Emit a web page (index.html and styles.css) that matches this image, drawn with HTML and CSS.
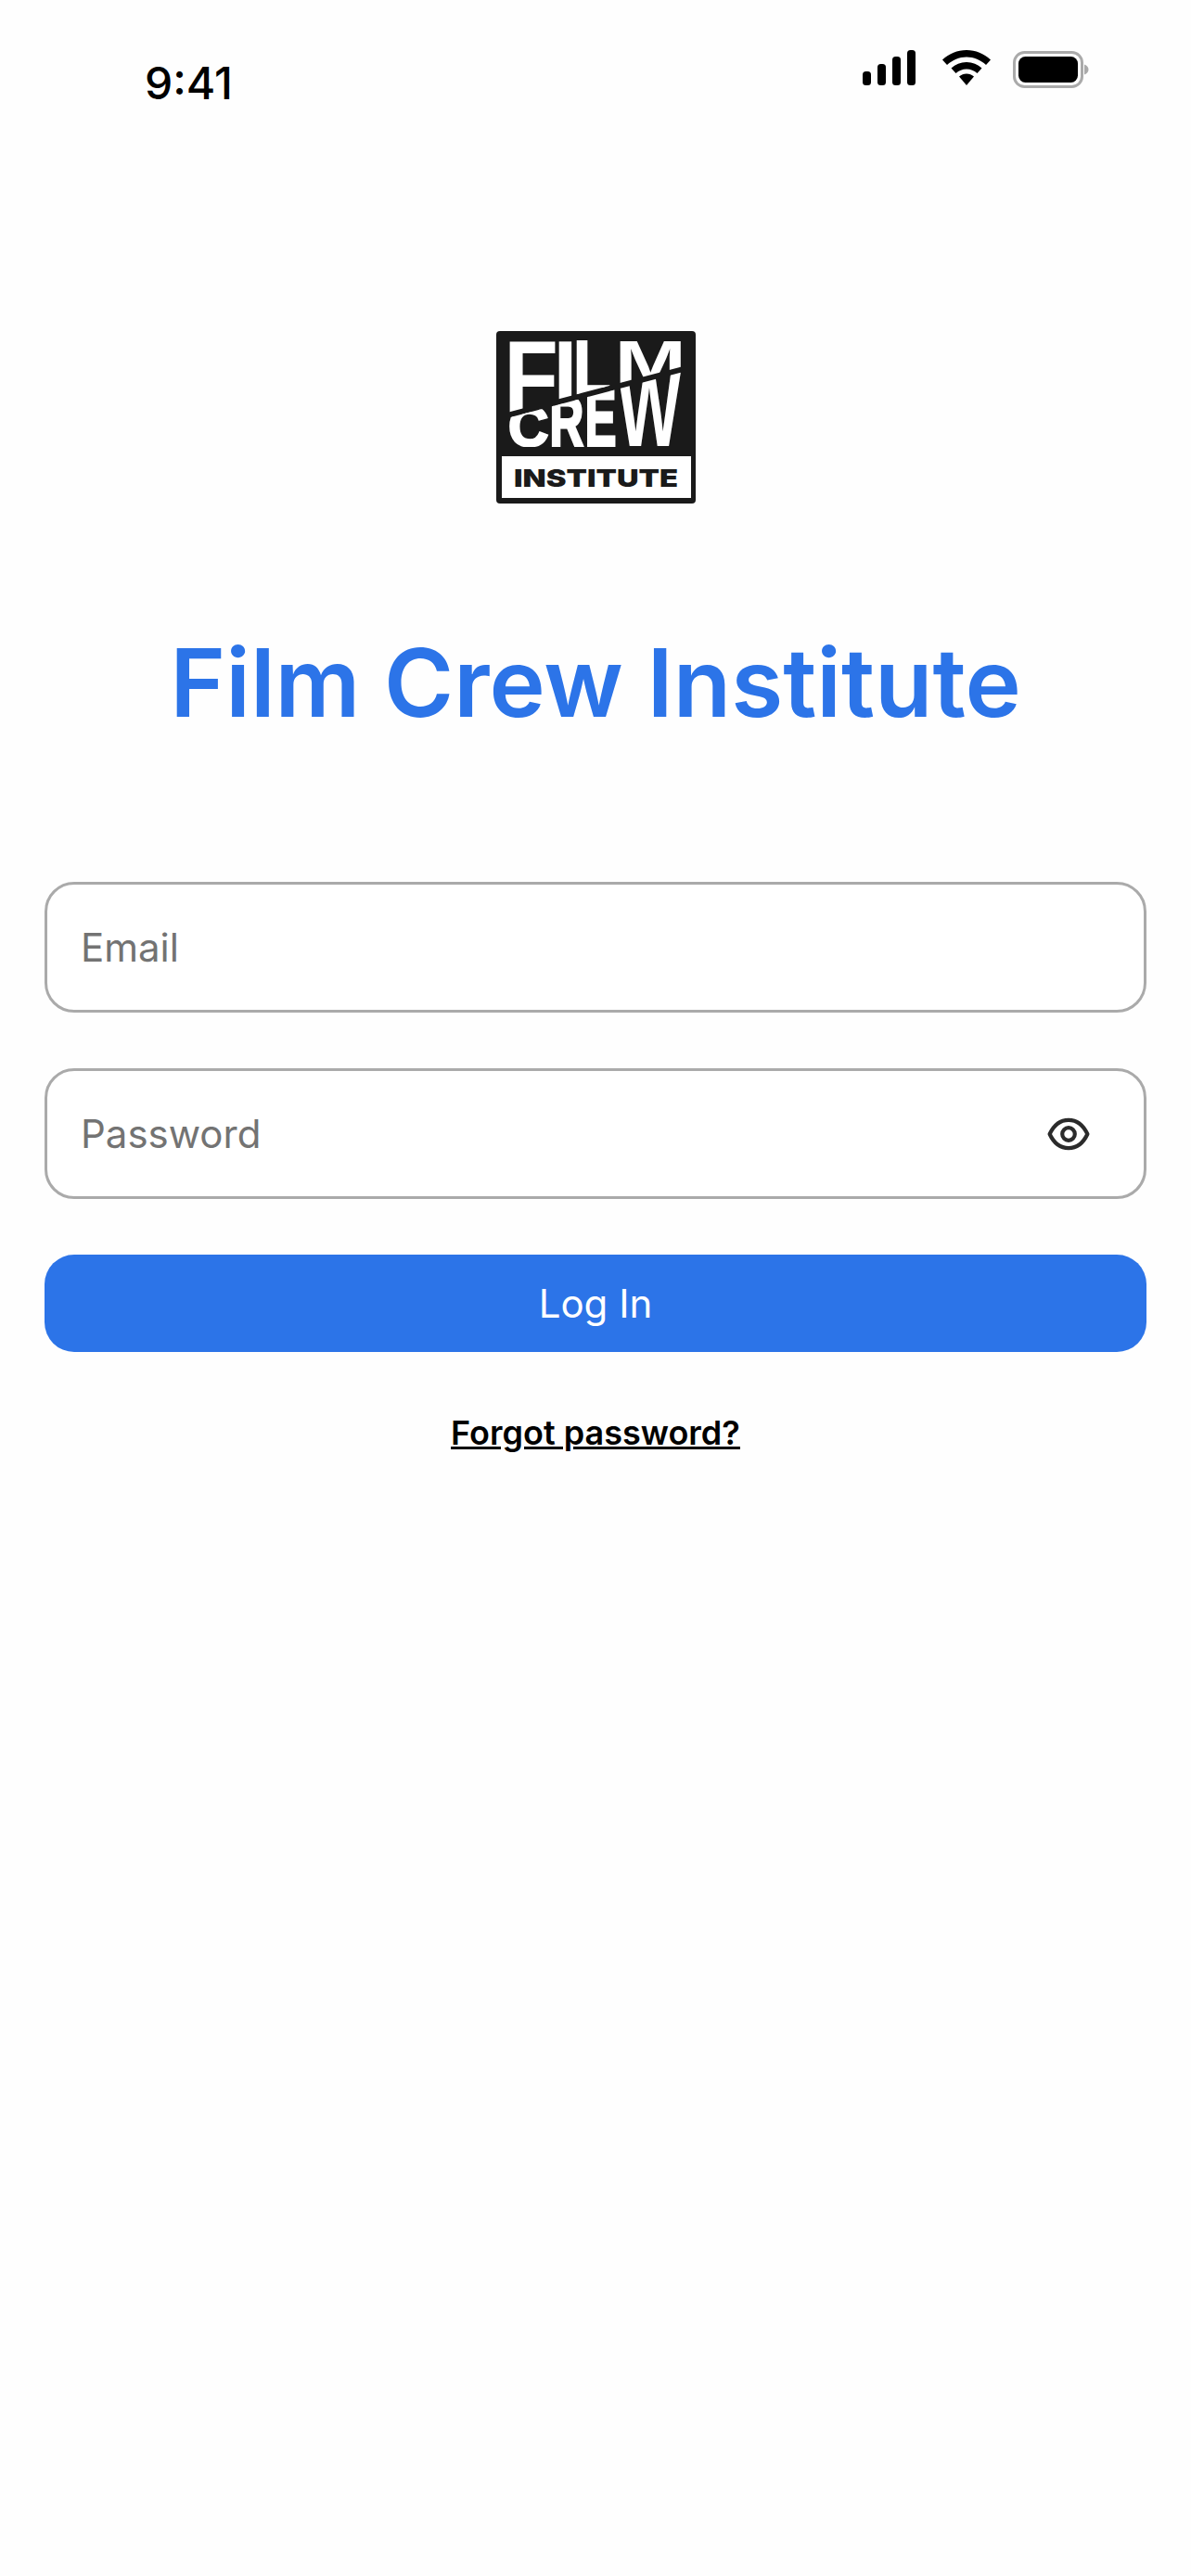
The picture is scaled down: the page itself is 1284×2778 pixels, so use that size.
FILE: index.html
```html
<!DOCTYPE html>
<html lang="en">
<head>
<meta charset="utf-8">
<title>Film Crew Institute</title>
<link rel="stylesheet" href="styles.css">
</head>
<body>
<div class="screen">
  <header class="status">
    <span class="time">9:41</span>
    <div class="status-icons">
      <svg class="signal" width="57" height="38" viewBox="0 0 57 38"><rect x="0" y="23" width="9" height="15" rx="3.5"/><rect x="16" y="15" width="9" height="23" rx="3.5"/><rect x="32" y="7" width="9" height="31" rx="3.5"/><rect x="48" y="0" width="9" height="38" rx="3.5"/></svg>
      <svg class="wifi" width="52" height="38" viewBox="0 0 52 38"><path d="M26 0C16 0 7.500 3.800 0 10.500L5 16C11 10.800 18 7.600 26 7.600S41 10.800 47 16L52 10.500C44.500 3.800 36 0 26 0Z"/><path d="M26 13C19.500 13 14 15.300 9.500 19.500L14.500 25C18 22 21.500 20.500 26 20.500S34 22 37.500 25L42.500 19.500C38 15.300 32.500 13 26 13Z"/><path d="M26 25.500C23 25.500 20.500 26.500 18 28.500L26 38L34 28.500C31.500 26.500 29 25.500 26 25.500Z"/></svg>
      <svg class="battery" width="82" height="40" viewBox="0 0 82 40"><rect x="1.500" y="1.500" width="73" height="37" rx="11" fill="#fff" stroke="#aaa" stroke-width="3"/><rect x="6" y="6" width="64" height="28" rx="7.500"/><path d="M77 14.500C80 15.500 81.500 17.500 81.500 20S80 24.500 77 25.500Z" fill="#aaa"/></svg>
    </div>
  </header>
  <main class="content">
    <svg class="logo" width="215" height="186" viewBox="0 0 215 186" role="img" aria-label="Film Crew Institute logo">
      <defs>
        <clipPath id="clipFilm"><polygon points="0,0 215,0 215,34.600 0,91"/></clipPath>
        <clipPath id="clipCrew"><polygon points="0,97 215,40.600 215,125 0,125"/></clipPath>
      </defs>
      <rect width="215" height="186" rx="4" fill="#1a1a1a"/>
      <g clip-path="url(#clipFilm)">
        <text class="logo-big" transform="translate(8.300 88) scale(.96 1.12)">F</text>
        <text class="logo-big" transform="translate(61.500 74) scale(.93 .916)">I</text>
        <text class="logo-big logo-thick" transform="translate(83.500 69) scale(.65 .843)">L</text>
        <text class="logo-big" transform="translate(127.500 56) scale(.93 .654)">M</text>
      </g>
      <g clip-path="url(#clipCrew)">
        <text class="logo-big logo-thick" transform="translate(13 124) scale(.6 .61)">C</text>
        <text class="logo-big logo-thick" transform="translate(57.500 124) scale(.51 .756)">R</text>
        <text class="logo-big logo-thick" transform="translate(95.500 124) scale(.51 .887)">E</text>
        <text class="logo-big" transform="translate(131 124) scale(.72 1.148)">W</text>
      </g>
      <rect x="6" y="135" width="204" height="45" fill="#fff"/>
      <text class="logo-small" x="19" y="168" textLength="177" lengthAdjust="spacingAndGlyphs">INSTITUTE</text>
    </svg>
    <h1 class="title">Film Crew Institute</h1>
    <form class="form">
      <div class="field"><span class="placeholder">Email</span></div>
      <div class="field field-password"><span class="placeholder">Password</span>
        <svg class="eye" width="46" height="46" viewBox="0 0 44 44" fill="none" stroke="#2b2b2b" stroke-width="4"><path d="M2.500 22C7 12.500 13.500 7.500 22 7.500S37 12.500 41.500 22C37 31.500 30.500 36.500 22 36.500S7 31.500 2.500 22Z" stroke-linejoin="round"/><circle cx="22" cy="22" r="6.500"/></svg>
      </div>
      <div class="button">Log In</div>
      <a class="forgot" href="#">Forgot password?</a>
    </form>
  </main>
</div>
</body>
</html>
```
FILE: styles.css
```css
* { box-sizing: border-box; }
html, body { margin: 0; padding: 0; background: #fefefe; }
body { font-family: Inter, "Liberation Sans", sans-serif; }
.screen { width: 1284px; height: 2778px; overflow: hidden; }
.status { height: 120px; display: flex; justify-content: space-between; align-items: flex-start; padding: 0 110px 0 156px; }
.time { font-size: 48px; line-height: 58px; font-weight: 500; color: #000; margin-top: 61px; }
.status-icons { display: flex; align-items: flex-start; margin-top: 54px; }
.signal { margin-right: 29px; }
.wifi { margin-right: 24px; }
.battery { margin-top: 1px; }
.content { display: flex; flex-direction: column; align-items: center; padding-top: 237px; }
.logo { display: block; }
.logo-big { font-family: "Liberation Sans", sans-serif; font-size: 100px; font-weight: 700; fill: #fff; }
.logo-thick { stroke: #fff; stroke-width: 2.500px; vector-effect: non-scaling-stroke; }
.logo-small { font-family: Inter, sans-serif; font-size: 26px; font-weight: 900; fill: #1a1a1a; }
.title { margin: 129px 0 0; font-size: 102px; line-height: 128px; font-weight: 600; color: #2c74e8; text-align: center; }
.form { width: 100%; padding: 0 48px; margin-top: 151px; display: flex; flex-direction: column; align-items: center; }
.field { width: 100%; height: 141px; border: 3px solid #aaa; border-radius: 32px; background: #fff; padding: 0 36px; margin-bottom: 60px; display: flex; justify-content: space-between; align-items: center; }
.field-password { padding-right: 58px; }
.placeholder { font-size: 42px; line-height: 52px; color: #737373; }
.button { width: 100%; height: 105px; border-radius: 32px; background: #2c74e8; color: #fff; font-size: 42px; display: flex; align-items: center; justify-content: center; }
.forgot { margin-top: 64px; font-size: 36px; line-height: 46px; font-weight: 600; color: #000; text-decoration: underline; }
```
